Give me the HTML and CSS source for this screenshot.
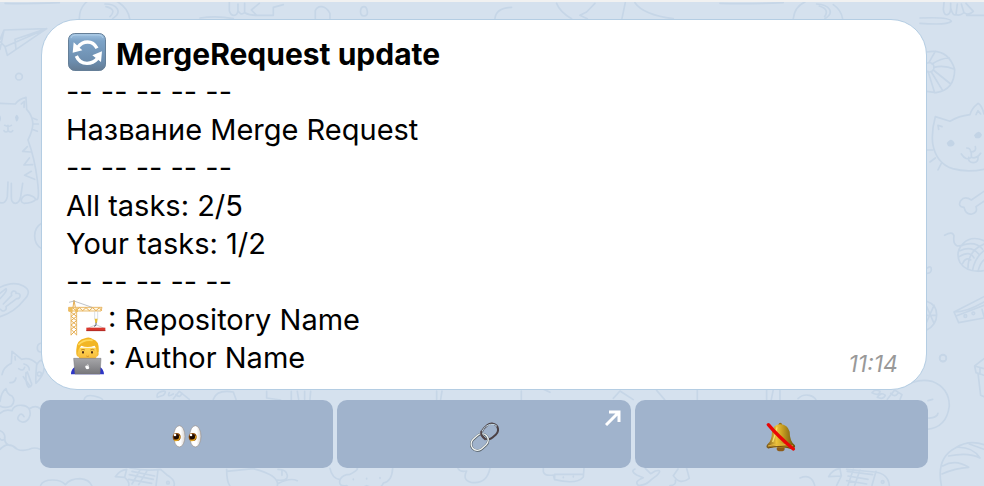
FILE: index.html
```html
<!DOCTYPE html>
<html lang="en">
<head>
<meta charset="utf-8">
<meta name="viewport" content="width=device-width, initial-scale=1">
<title>MergeRequest update</title>
<link rel="stylesheet" href="styles.css">
</head>
<body>
<svg class="wallpaper" viewBox="0 0 984 486" preserveAspectRatio="xMidYMin slice" aria-hidden="true">
  <!-- top left: plane, curl, cat -->
  <g transform="scale(.3333)">
    <path d="M15 10Q70 12 178 8M0 148L12 90L140 86L22 166L15 140L0 125M12 90L0 118M140 86L15 140M140 86L45 118L48 148M238 56C238 20 262-8 300-8S382 12 389 56M315 12C350 12 370 35 338 56M318 20Q352 28 330 50"/>
    <circle cx="57" cy="230" r="10"/>
    <path d="M600 54Q650 46 700 56M688 6V32Q692 46 702 46T714 32V12M714 32Q722 48 734 38V10M734 38Q748 46 770 46L754 30L778 10M764 46H820V22L850 14"/>
    <path d="M946 56V32Q952 18 966 20T990 40V56M1082 30Q1084 20 1092 20T1102 34T1092 48T1082 30M1485 56Q1488 24 1535 22M1670 10Q1680 36 1715 56M1785 10L1760 36L1740 46L1762 56M1866 56L1876 8M1905 8Q1930 44 2020 56M2160 10Q2240 13 2350 8M2380 56Q2384 20 2415 6M2450 12C2490 14 2505 38 2475 56M2458 18Q2490 28 2474 50M2500 14Q2524 30 2528 56"/>
  </g>
  <g transform="translate(0 80) scale(.3333)">
    <path d="M0 70L46 72Q55 58 78 52L80 88Q95 104 98 125T84 180Q104 235 112 300T108 358Q98 370 72 370Q58 366 68 352T100 350L108 358M68 310L62 350Q58 370 46 370T34 352V310M24 306L22 350Q18 372 0 368M64 72L73 64L72 82M97 114L111 119M98 132H115M96 148L112 154M82 200L68 214L91 216M88 234L72 255L98 254M94 274L74 286L104 298M24 136V150M14 136Q25 142 34 136M12 152Q18 160 24 152Q32 160 38 152"/>
    <path class="solid" d="M0 106Q6 114 0 126M45 112Q50 96 56 112Q55 126 48 124Z"/>
    <path d="M125 430Q104 442 104 468T125 506M0 622Q40 602 70 618T70 662Q45 695 0 710M0 640L18 626Q24 632 0 656M35 646C30 630 50 630 48 640C66 638 62 658 50 656L18 680C22 692 6 698 2 688M35 646L10 672M122 790Q112 792 112 804T122 816M6 884Q10 862 34 850L36 814L65 838Q90 830 112 852M45 830L46 840M30 908Q44 910 48 894M56 866Q70 876 74 862M72 852Q88 856 88 870M78 878Q76 912 86 922Q100 918 92 904L82 876M110 854Q122 838 125 842M110 854Q106 900 108 910Q132 884 132 866"/>
    <circle cx="118" cy="882" r="6"/>
  </g>
  <!-- lower left: cloud, drop -->
  <g transform="translate(0 370) scale(.3333)">
    <path d="M0 94Q4 66 18 56Q22 74 36 78Q48 92 34 108Q16 116 0 108M0 130Q14 116 36 122Q42 104 66 106Q94 108 90 136Q84 158 66 156Q48 150 56 138T72 140M88 116Q108 104 120 116M0 182Q18 190 14 208Q4 214 0 206M14 200Q12 226 38 228Q58 248 88 238Q104 230 120 238M0 238Q24 212 50 236M70 20L88 46"/>
    <path d="M122 346Q128 330 158 330Q184 330 196 344Q210 326 240 326Q268 328 276 348M346 320Q360 300 380 298L374 322L346 320M374 322Q390 336 386 348M390 294Q440 304 482 298L500 314Q528 330 522 348M474 300L468 348M396 304L464 318M388 314L460 328M386 328L455 340M420 300L396 342M440 304L416 344"/>
    <circle cx="504" cy="338" r="4"/>
    <path d="M252 90Q256 72 282 78T308 90M472 82Q468 68 486 64T490 76ZM508 68Q500 84 520 72M520 86L538 64L568 88M528 74Q540 86 546 70M640 88Q650 58 700 66L708 88M800 64V84L842 90M874 64V90M892 64L896 88M914 64V88M932 64L930 88M680 298Q680 336 690 348M680 304L760 296Q840 316 832 348M834 298Q860 298 862 316T832 330M846 300V316M836 340Q870 322 892 332"/>
  </g>
  <!-- lower middle -->
  <g transform="translate(320 385) scale(.3333)">
    <path d="M30 250Q36 280 60 284Q68 268 90 268Q120 252 110 248M60 284Q54 306 80 302Q100 322 140 302Q180 320 190 294Q216 290 218 250M100 282V284M140 280V282M180 278V280M414 250Q420 262 440 258Q426 286 454 292Q500 298 510 250M670 250V260Q674 274 700 270L704 284Q770 300 790 276L792 250M704 284V268H790M730 276V278M760 274V276M945 252Q930 258 950 270L970 278Q940 290 956 302Q980 300 994 284L1010 272Q1030 252 1006 258L992 266L976 250M1066 286Q1070 300 1050 302M1100 250L1108 280Q1080 302 1060 272L1074 252"/>
    <path d="M350 18V44M366 18L362 44M600 8Q640 -6 690 22M604 18V44M880 40L900 18L940 44M1010 16L1034 44M1132 16V44M1340 16V44M1360 14L1354 44M1380 14V44"/>
  </g>
  <g transform="translate(800 330) scale(.3333)">
    <path d="M-6 206Q8 192 28 196Q44 200 48 210M216 188Q224 176 240 184Q238 200 216 188M232 202Q244 184 256 196Q250 210 232 202M262 208L284 180L306 194L300 208M272 190Q284 204 294 190"/>
    <path d="M308 172Q350 144 396 154Q448 174 448 228Q440 292 382 298M382 264Q410 266 414 250M384 212L398 208"/>
    <path d="M86 440Q98 418 120 416L124 438L86 440M124 438L110 466M140 418L224 426Q264 430 268 466M142 424L218 434M144 438L204 448M140 452L200 462M160 418L144 466M180 420L164 466M228 424L216 466M0 444Q34 430 44 466"/>
    <circle cx="248" cy="456" r="4"/>
    <path d="M424 466Q408 384 466 354Q506 328 552 344M428 408Q466 386 506 412Q466 414 426 432M446 378Q506 366 540 384Q518 350 470 352M508 342L552 358"/>
    <circle cx="429" cy="84" r="10"/>
  </g>
  <!-- right edge: ball, cat, bone, yarn, collar, gift -->
  <g transform="translate(920 0) scale(.3333)">
    <path d="M72 8L70 28Q72 46 82 44T92 24V10M92 24Q98 48 108 44L112 12M108 44Q120 48 132 38L124 12M132 38Q146 48 160 34L138 10M140 46H192M0 54Q90 50 94 64Q82 76 0 70"/>
    <path d="M20 156Q84 144 104 208Q104 270 48 278L20 274M28 186Q34 174 46 154M36 192Q64 174 88 174M42 202Q72 194 104 208M40 210L92 252M34 216L68 272M24 214L44 278"/>
    <circle cx="28" cy="202" r="14"/>
    <path d="M192 342Q186 316 174 310Q154 326 150 344Q116 348 90 364L46 350Q34 392 38 430Q48 490 98 506Q140 518 192 508M56 388L54 376L66 380M168 344L174 332L182 342M20 450H38M30 486L46 474M54 510L64 490M140 444Q152 444 152 456Q170 456 166 440M154 456V472Q138 484 124 462M154 472Q170 478 182 460M146 472Q144 488 160 488Q176 488 174 468"/>
    <path class="solid" d="M80 430Q94 408 104 430Q100 444 84 438ZM162 406Q176 386 186 404Q182 418 166 414Z"/>
    <path d="M192 574L154 600Q134 586 122 602Q112 620 132 622Q138 646 156 642Q174 638 168 620L192 604M74 706Q98 692 102 708Q98 732 112 738L128 736M192 722Q154 706 130 730Q104 756 120 788Q142 820 192 812M126 736Q166 722 188 748M120 752Q154 736 176 762M118 770Q150 750 162 774M128 790Q138 770 152 780M144 804Q144 752 192 732M158 810Q164 774 192 752M174 814Q180 790 192 780M102 936L192 890M102 936L116 968L192 954M108 948L192 916M104 936Q140 936 192 906M192 950L186 928M22 804Q34 796 34 808T22 820M20 904Q50 914 50 944T20 990M20 920L42 970M20 946H50M20 966L42 916"/>
    <circle cx="136" cy="948" r="4"/><circle cx="160" cy="940" r="4"/>
    <circle cx="69" cy="1075" r="10"/>
    <path d="M192 1076L164 1098L168 1118L192 1126M164 1098L192 1106M180 1104V1122M174 1120L182 1186L192 1190"/>
  </g>
</svg>

<main class="chat">
  <article class="bubble">
    <div class="message">
      <h1 class="line title">
        <svg class="emoji" viewBox="0 0 114 114" role="img" aria-label="Refresh">
          <defs><linearGradient id="tile" x2="0" y2="1"><stop offset="0" stop-color="#a1c4e3"/><stop offset=".2" stop-color="#7da3c7"/><stop offset=".75" stop-color="#6c8dae"/><stop offset="1" stop-color="#647b93"/></linearGradient></defs>
          <rect x="1.500" y="1.500" width="111" height="111" rx="19" fill="url(#tile)" stroke="#657f98" stroke-width="3"/>
          <path d="M9 15Q11 6 21 6H93Q103 6 105 15" fill="none" stroke="#bbd5eb" stroke-width="2"/>
          <g fill="none" stroke="#fff" stroke-width="10"><path d="M30 42Q41 27 59 27Q77 27 87 46"/><path d="M25 69Q34 91 57 91Q76 91 88 77"/></g>
          <path fill="#fff" d="M17 28L14 59L43 52ZM73 67L102 55L99 87Z"/>
        </svg>
        <span class="title-text">MergeRequest update</span>
      </h1>
      <p class="line">-- -- -- -- --</p>
      <p class="line">Название Merge Request</p>
      <p class="line">-- -- -- -- --</p>
      <p class="line">All tasks: 2/5</p>
      <p class="line">Your tasks: 1/2</p>
      <p class="line">-- -- -- -- --</p>
      <p class="line">
        <svg class="emoji" viewBox="54 29 114 114" role="img" aria-label="Repository">
          <g fill="none" stroke="#e5ad50" stroke-width="2.500">
            <path fill="#fff8e8" d="M63 64V138M80 64V138M56 54H156L153 65H56Z"/>
            <path stroke-width="3" d="M63 68L80 81L63 94L80 107L63 120L80 137M80 68L63 81L80 94L63 107L80 120L63 137M58 64L68 55L78 64L88 55L98 64L108 55L118 64L128 55L138 64L148 55L155 64"/>
            <path stroke-width="3" d="M69 54L72 33L76 54"/>
          </g>
          <path d="M57 39L72 35L126 54" fill="none" stroke="#9da5ad" stroke-width="2"/>
          <path fill="#edbc5c" d="M56 54H68V67H56ZM76 57H84V68H76Z"/>
          <path d="M134 66V90M143 66V90" stroke="#b6c2cd" stroke-width="1.500"/>
          <path d="M134 88H143L141 101H136Z" fill="#e5bd36"/>
          <path d="M138 100V108Q132 108 134 112" fill="none" stroke="#566170" stroke-width="3"/>
          <path d="M113 117L138 106L163 117" fill="none" stroke="#a0a7ad" stroke-width="1.500"/>
          <rect x="109" y="115" width="57" height="10" fill="#d9382e"/><path d="M109 124H166" stroke="#9f2521" stroke-width="2"/>
        </svg>
        <span>: Repository Name</span>
      </p>
      <p class="line">
        <svg class="emoji" viewBox="54 142 114 114" role="img" aria-label="Author">
          <defs>
            <linearGradient id="face" x2="0" y2="1"><stop stop-color="#ffd757"/><stop offset="1" stop-color="#f5ad28"/></linearGradient>
            <linearGradient id="lid" x2="0" y2="1"><stop stop-color="#a6a6a9"/><stop offset="1" stop-color="#77777b"/></linearGradient>
          </defs>
          <path fill="#2d35c6" d="M63 254Q63 237 76 232H149Q161 237 162 254Z"/>
          <path d="M83 185Q77 185 79 194Q80 202 86 201H138Q146 200 146 192Q146 184 141 185Z" fill="#f5bd36"/>
          <path d="M84 174H141V194Q138 222 113 224Q88 222 84 194Z" fill="url(#face)"/>
          <path d="M79 188Q76 151 105 146Q118 140 129 149Q149 154 146 188L141 187Q139 174 134 168Q112 176 94 168Q86 175 84 188Z" fill="#f2b624"/>
          <path d="M85 166Q100 148 128 152" fill="none" stroke="#ffd95c" stroke-width="5"/>
          <path d="M93 181Q99 177 105 181M121 181Q127 177 133 181" fill="none" stroke="#a86812" stroke-width="2"/>
          <ellipse cx="99" cy="188" rx="3" ry="4" fill="#4b2b14"/><ellipse cx="126" cy="188" rx="3" ry="4" fill="#4b2b14"/>
          <path d="M109 199Q113 202 117 199" fill="none" stroke="#c57b16" stroke-width="2"/>
          <path d="M71 206H153L150 253H75Z" fill="url(#lid)" stroke="#737377" stroke-width="1.500"/>
          <path d="M112 228Q104 226 106 233Q109 241 113 238Q117 239 118 234Q114 231 117 228Q114 226 112 228ZM112 227Q112 223 115 222Q115 226 112 227Z" fill="#fff"/>
        </svg>
        <span>: Author Name</span>
      </p>
    </div>
    <time class="sent" datetime="11:14">11:14</time>
  </article>

  <div class="actions">
    <button class="action" type="button" aria-label="Watch">
      <svg class="glyph" viewBox="123 82 90 90" aria-hidden="true">
        <defs><linearGradient id="white"><stop offset=".6" stop-color="#fff"/><stop offset="1" stop-color="#d8d4d1"/></linearGradient></defs>
        <g id="eye"><ellipse cx="145" cy="125" rx="17" ry="32" fill="url(#white)" stroke="#9b928c" stroke-width="2"/><circle cx="137" cy="127" r="12" fill="#8d4c0b"/><path d="M130 137Q143 140 147 124" fill="none" stroke="#dca21f" stroke-width="4"/><circle cx="136" cy="126" r="8" fill="#1e0b03"/><circle cx="132" cy="121" r="4" fill="#fff"/></g>
        <use href="#eye" x="48"/>
      </svg>
    </button>
    <button class="action" type="button" aria-label="Open link">
      <svg class="glyph" viewBox="84 81 90 90" aria-hidden="true">
        <g fill="none">
          <rect x="121" y="90" width="52" height="38" rx="19" transform="rotate(-42 147 109)" stroke="#4b4145" stroke-width="6"/>
          <path d="M124 108Q132 91 149 88Q163 86 168 94" stroke="#c4dce9" stroke-width="3"/>
          <rect x="88" y="123" width="56" height="38" rx="19" transform="rotate(-42 116 142)" stroke="#515b62" stroke-width="7"/>
          <rect x="88" y="122" width="56" height="38" rx="19" transform="rotate(-42 116 141)" stroke="#f1f5f3" stroke-width="4"/>
          <path d="M121 108Q118 124 134 134" stroke="#53464a" stroke-width="6"/>
          <path d="M124 108Q122 121 136 130" stroke="#a9c1cf" stroke-width="2"/>
        </g>
      </svg>
      <svg class="external" viewBox="0 0 16 16" aria-hidden="true"><path d="M1 15L14 2M4 2H14V12" fill="none" stroke="#fff" stroke-width="3"/></svg>
    </button>
    <button class="action" type="button" aria-label="Mute">
      <svg class="glyph" viewBox="109 80 90 90" aria-hidden="true">
        <defs><linearGradient id="brass"><stop stop-color="#765319"/><stop offset=".35" stop-color="#edc43a"/><stop offset=".55" stop-color="#c99f22"/><stop offset="1" stop-color="#65500c"/></linearGradient></defs>
        <circle cx="152" cy="87" r="5" fill="#947016"/>
        <ellipse cx="153" cy="160" rx="12" ry="8" fill="#8d5c19"/>
        <path d="M127 108Q131 88 152 87Q174 88 180 109Q180 137 195 149Q200 158 187 161Q152 151 114 159Q107 154 114 146Q127 137 127 108Z" fill="url(#brass)"/>
        <path d="M115 152Q151 140 190 152" fill="none" stroke="#e4b63d" stroke-width="3"/>
        <path d="M115 158Q150 148 188 160" fill="none" stroke="#704913" stroke-width="3"/>
        <path d="M142 96Q136 121 129 140" fill="none" stroke="#f7df6c" stroke-width="4"/>
        <path d="M116 88Q146 124 191 161" fill="none" stroke="#e90606" stroke-width="10" stroke-linecap="round"/>
      </svg>
    </button>
  </div>
</main>
</body>
</html>
```
FILE: styles.css
```css
* {
  box-sizing: border-box;
}

body {
  position: relative;
  min-height: 100vh;
  margin: 0;
  overflow: hidden;
  border-top: 2px solid #f1f1f1;
  background: #d5e1ee;
  color: #000;
  font-family: Inter, "Noto Sans", sans-serif;
}

.wallpaper {
  position: absolute;
  top: -2px;
  left: 0;
  width: 100%;
  height: 100vh;
  clip-path: inset(2px 0 0 0);
  fill: none;
  stroke: #c6d6e7;
  stroke-width: 5;
  stroke-linecap: round;
  stroke-linejoin: round;
}

.wallpaper .solid {
  fill: #c3d4e6;
  stroke: none;
}

.chat {
  position: relative;
  display: flex;
  flex-direction: column;
  gap: 10px;
  padding: 17px 56px 18px 40px;
}

.bubble {
  display: flex;
  justify-content: space-between;
  align-items: flex-end;
  margin: 0 1px;
  padding: 15px 28px 12px 24px;
  border: 1px solid #b4cde3;
  border-radius: 36px;
  background: #fff;
}

.line {
  display: flex;
  align-items: center;
  margin: 0;
  font-size: 29px;
  font-weight: 400;
  line-height: 38px;
}

.title {
  gap: 8px;
}

.title-text {
  font-size: 30px;
  font-weight: 700;
}

.emoji {
  width: 38px;
  height: 38px;
  margin: -4px 2px 0 2px;
}

.sent {
  color: #999;
  font-size: 23px;
  font-style: italic;
  line-height: 26px;
}

.actions {
  display: grid;
  grid-template-columns: repeat(3, 1fr);
  gap: 4px;
}

.action {
  position: relative;
  display: flex;
  justify-content: center;
  align-items: center;
  height: 68px;
  padding: 6px 0 0;
  border: 0;
  border-radius: 10px;
  background: #a0b3cc;
  cursor: pointer;
}

.glyph {
  width: 30px;
  height: 30px;
}

.external {
  position: absolute;
  top: 10px;
  right: 10px;
  width: 16px;
  height: 16px;
}
```
